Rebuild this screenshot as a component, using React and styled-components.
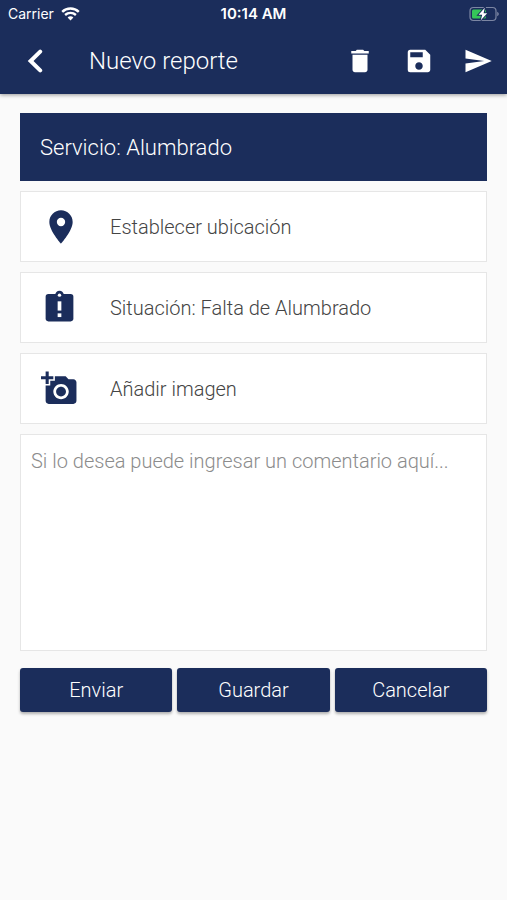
import React from 'react';
import styled, { createGlobalStyle } from 'styled-components';
import { MdAddAPhoto, MdDelete, MdLocationOn, MdSave, MdSend } from 'react-icons/md';

const options = [
  { id: 'ubicacion', text: 'Establecer ubicación', Icon: MdLocationOn, size: 40 },
  { id: 'situacion', text: 'Situación: Falta de Alumbrado', Icon: ClipboardAlertIcon, size: 37 },
  { id: 'imagen', text: 'Añadir imagen', Icon: MdAddAPhoto, size: 37 },
];

function ClipboardAlertIcon({ size }) {
  return (
    <svg width={size} height={size} viewBox="0 0 24 24" fill="currentColor" aria-hidden="true">
      <rect x="3" y="3.2" width="18" height="17.8" rx="1.8" />
      <circle cx="12" cy="3.9" r="2.8" />
      <circle cx="12" cy="4" r="1.1" fill="#fff" />
      <rect x="10.8" y="8" width="2.4" height="6" fill="#fff" />
      <rect x="10.8" y="15.8" width="2.4" height="2.4" fill="#fff" />
    </svg>
  );
}

function WifiIcon() {
  return (
    <svg width="19" height="14" viewBox="0 0 19 14" fill="none" stroke="#fff" strokeWidth="2.4" aria-hidden="true">
      <path d="M1.2 4.9C5.8 0.4 13.2 0.4 17.8 4.9" />
      <path d="M4.1 8C7.2 5.2 11.8 5.2 14.9 8" />
      <path d="M9.5 13.4L6.6 10.4C8.2 9 10.8 9 12.4 10.4Z" fill="#fff" stroke="none" />
    </svg>
  );
}

function BatteryIcon() {
  return (
    <svg width="30" height="16" viewBox="0 0 30 16" aria-hidden="true">
      <rect x="1" y="1.5" width="26" height="13" rx="3.5" fill="none" stroke="#7c86a3" strokeWidth="1.2" />
      <path d="M28.2 5.8C30.3 6.6 30.3 9.4 28.2 10.2Z" fill="#7c86a3" />
      <rect x="3" y="3.5" width="14" height="9" rx="1.5" fill="#35c759" />
      <path d="M15.8 1.8L9.6 8.8H13.2L11.8 14.2L18.2 7.2H14.6Z" fill="#fff" stroke="#1b2d5b" strokeWidth="2" paintOrder="stroke" />
    </svg>
  );
}

function BackIcon() {
  return (
    <svg width="16" height="26" viewBox="0 0 16 26" fill="none" stroke="#fff" strokeWidth="4" aria-hidden="true">
      <path d="M13.2 3.6L3.6 13L13.2 22.4" strokeLinecap="round" />
    </svg>
  );
}

function App() {
  return (
    <>
      <GlobalStyle />
      <Header>
        <StatusBar>
          <Carrier>
            Carrier
            <WifiIcon />
          </Carrier>
          <Clock>10:14 AM</Clock>
          <Battery>
            <BatteryIcon />
          </Battery>
        </StatusBar>
        <Toolbar>
          <BackButton aria-label="Volver">
            <BackIcon />
          </BackButton>
          <Title>Nuevo reporte</Title>
          <Actions>
            <IconButton aria-label="Eliminar"><MdDelete /></IconButton>
            <IconButton aria-label="Guardar reporte"><MdSave /></IconButton>
            <IconButton aria-label="Enviar reporte"><MdSend /></IconButton>
          </Actions>
        </Toolbar>
      </Header>

      <Form onSubmit={(e) => e.preventDefault()}>
        <Service>Servicio: Alumbrado</Service>
        {options.map(({ id, text, Icon, size }) => (
          <Option key={id} type="button">
            <Icon size={size} />
            {text}
          </Option>
        ))}
        <Comment
          aria-label="Comentario"
          placeholder="Si lo desea puede ingresar un comentario aquí..."
        />
        <Buttons>
          <Button type="submit">Enviar</Button>
          <Button type="button">Guardar</Button>
          <Button type="button">Cancelar</Button>
        </Buttons>
      </Form>
    </>
  );
}

export default App;

const GlobalStyle = createGlobalStyle`
* {
  box-sizing: border-box;
}
body {
  margin: 0;
  background: #fafafa;
  color: #444;
  font-family: Roboto, sans-serif;
  font-weight: 300;
}
button, textarea {
  font: inherit;
}
button {
  cursor: pointer;
}
`;

const Header = styled.header`
  background: #1b2d5b;
  color: #fff;
  box-shadow: 0 1px 4px rgba(0, 0, 0, 0.4);
`;

const StatusBar = styled.div`
  display: grid;
  grid-template-columns: 1fr auto 1fr;
  align-items: center;
  height: 27px;
  padding: 0 8px;
  font-family: Inter, sans-serif;
  font-size: 14px;
`;

const Carrier = styled.span`
  display: flex;
  align-items: center;
  gap: 7px;
  font-weight: 400;
`;

const Clock = styled.span`
  font-size: 15px;
  font-weight: 600;
`;

const Battery = styled.span`
  display: flex;
  justify-content: flex-end;
`;

const Toolbar = styled.div`
  display: flex;
  align-items: center;
  height: 67px;
  padding: 0 7px 0 20px;
`;

const BackButton = styled.button`
  display: flex;
  align-items: center;
  justify-content: center;
  width: 30px;
  height: 44px;
  padding: 0;
  border: 0;
  background: none;
`;

const Title = styled.h1`
  flex: 1;
  margin: 0 0 0 39px;
  font-size: 24px;
  font-weight: 300;
`;

const Actions = styled.div`
  display: flex;
  gap: 15px;
`;

const IconButton = styled.button`
  display: flex;
  align-items: center;
  justify-content: center;
  width: 44px;
  height: 44px;
  padding: 0;
  border: 0;
  background: none;
  color: #fff;
  font-size: 30px;
`;

const Form = styled.form`
  display: flex;
  flex-direction: column;
  gap: 10px;
  padding: 19px 20px;
`;

const Service = styled.h2`
  margin: 0;
  padding: 21px 20px 19px;
  background: #1b2d5b;
  color: #fff;
  font-size: 22px;
  font-weight: 300;
  line-height: 28px;
`;

const Option = styled.button`
  display: grid;
  grid-template-columns: 69px 1fr;
  align-items: center;
  height: 71px;
  padding: 0 20px;
  border: 1px solid #e6e6e6;
  background: #fff;
  color: #444;
  font-size: 20px;
  text-align: left;
  svg {
    color: #1b2d5b;
  }
`;

const Comment = styled.textarea`
  display: block;
  height: 217px;
  padding: 13px 10px;
  border: 1px solid #e6e6e6;
  border-radius: 0;
  outline: none;
  resize: none;
  background: #fff;
  color: #444;
  font-size: 20px;
  line-height: 26px;
  &::placeholder {
    color: #8c8c8c;
    opacity: 1;
  }
`;

const Buttons = styled.div`
  display: grid;
  grid-template-columns: repeat(3, 1fr);
  gap: 5px;
  margin-top: 7px;
`;

const Button = styled.button`
  height: 44px;
  padding: 0;
  border: 0;
  border-radius: 3px;
  background: #1b2d5b;
  box-shadow: 0 2px 3px rgba(0, 0, 0, 0.3);
  color: #fff;
  font-size: 20px;
`;
